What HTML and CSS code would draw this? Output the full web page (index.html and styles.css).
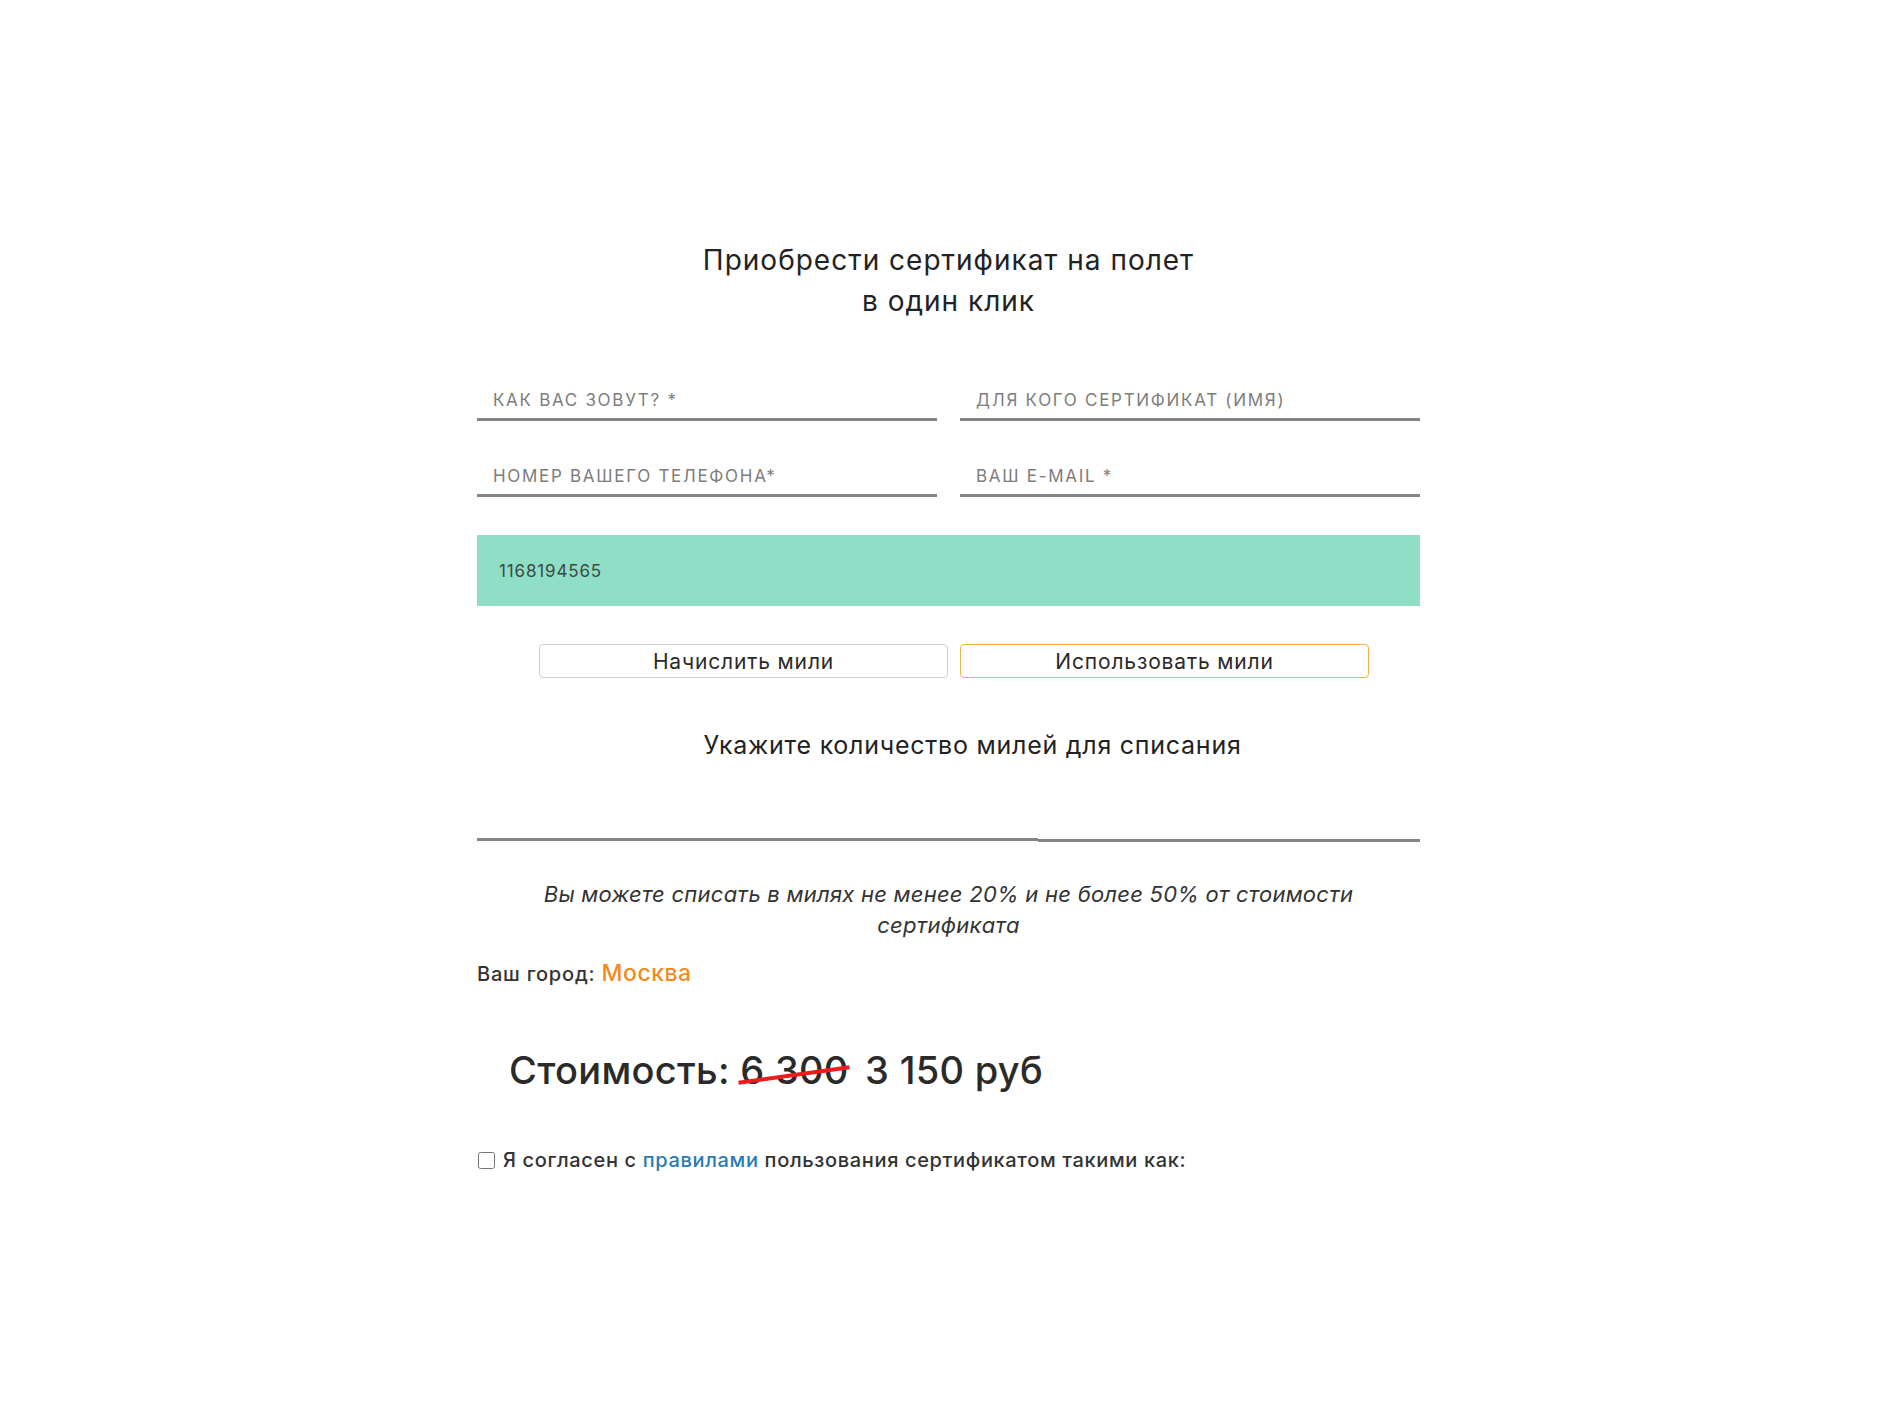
FILE: index.html
```html
<!DOCTYPE html>
<html lang="ru">
<head>
<meta charset="utf-8">
<title>Сертификат</title>
<link rel="stylesheet" href="styles.css">
</head>
<body>
<div class="wrap">
  <h1 class="title">Приобрести сертификат на полет<br>в один клик</h1>
  <div class="grid">
    <input class="field" type="text" placeholder="Как вас зовут? *">
    <input class="field" type="text" placeholder="Для кого сертификат (имя)">
    <input class="field" type="text" placeholder="Номер вашего телефона*">
    <input class="field" type="text" placeholder="Ваш e-mail *">
  </div>
  <div class="card">1168194565</div>
  <div class="btns">
    <button class="btn">Начислить мили</button>
    <button class="btn btn-active">Использовать мили</button>
  </div>
  <p class="miles-title">Укажите количество милей для списания</p>
  <div class="miles-input"><span class="miles-left"></span><span class="miles-right"></span></div>
  <p class="note">Вы можете списать в милях не менее 20% и не более 50% от стоимости сертификата</p>
  <p class="city">Ваш город: <span class="city-name">Москва</span></p>
  <p class="price">Стоимость: <span class="old">6 300</span> 3 150 руб</p>
  <label class="agree"><input type="checkbox" class="check"> Я согласен с <a href="#" class="link">правилами</a> пользования сертификатом такими как:</label>
</div>
</body>
</html>
```

FILE: styles.css
```css
html, body {
  margin: 0;
  padding: 0;
  background: #fff;
}
body {
  padding-left: 7px;
  font-family: Inter, "Noto Sans", sans-serif;
  color: #2a2a2a;
}
.wrap {
  width: 943px;
  margin: 0 auto;
  padding-top: 240px;
  padding-bottom: 200px;
}
.title {
  margin: 0;
  text-align: center;
  font-weight: 400;
  font-size: 28px;
  line-height: 41px;
  letter-spacing: 1px;
  color: #222;
}
.grid {
  margin-top: 53px;
  display: grid;
  grid-template-columns: 460px 460px;
  column-gap: 23px;
  row-gap: 30px;
}
.field {
  display: block;
  width: 100%;
  height: 46px;
  box-sizing: border-box;
  border: 0;
  border-bottom: 3px solid #858585;
  padding: 7px 0 0 16px;
  font-family: inherit;
  font-size: 17px;
  letter-spacing: 1.7px;
  text-transform: uppercase;
  outline: none;
  background: transparent;
}
.field::placeholder {
  color: #7d7d7d;
  text-transform: uppercase;
}
.card {
  margin-top: 38px;
  height: 71px;
  background: #8fdec6;
  display: flex;
  align-items: center;
  padding-left: 22px;
  font-size: 17px;
  letter-spacing: 0.85px;
  color: #3a4a44;
}
.btns {
  margin-top: 38px;
  display: flex;
  gap: 12px;
  padding: 0 51px 0 62px;
}
.btn {
  flex: 1;
  height: 34px;
  background: #fff;
  border: 1px solid #cfcfcf;
  border-radius: 4px;
  font-family: inherit;
  font-size: 21px;
  color: #2a2a2a;
  letter-spacing: 0.85px;
  padding: 0;
}
.btn-active {
  border-color: #efb14c;
}
.miles-title {
  margin: 52px 0 0;
  text-align: center;
  font-size: 25px;
  line-height: 30px;
  letter-spacing: 0.75px;
  color: #222;
  padding-left: 48px;
}
.miles-input {
  margin-top: 78px;
  display: flex;
  align-items: flex-end;
  height: 3px;
}
.miles-left {
  width: 561px;
  height: 3px;
  background: #858585;
  align-self: flex-start;
}
.miles-right {
  flex: 1;
  height: 3px;
  background: #858585;
  transform: translateY(1px);
}
.note {
  margin: 38px 0 0;
  padding: 0 50px;
  text-align: center;
  font-style: italic;
  font-size: 22px;
  line-height: 31px;
  letter-spacing: 0.25px;
  color: #333;
}
.city {
  margin: 18px 0 0;
  font-size: 20px;
  line-height: 28px;
  letter-spacing: 0.8px;
  font-weight: 500;
  color: #333;
}
.city-name {
  color: #f28a1f;
  font-size: 23px;
  letter-spacing: 0.5px;
}
.price {
  margin: 58px 0 0;
  padding-left: 32px;
  font-size: 38px;
  line-height: 48px;
  letter-spacing: 0.3px;
  font-weight: 500;
  color: #2a2a2a;
}
.old {
  position: relative;
  display: inline-block;
  margin-right: 6px;
}
.old::after {
  content: "";
  position: absolute;
  left: -2px;
  right: -2px;
  top: 50%;
  height: 4px;
  background: #ee1b1b;
  transform: translateY(3px) rotate(-8deg);
}
.agree {
  display: flex;
  align-items: center;
  margin-top: 54px;
  font-size: 20px;
  line-height: 24px;
  letter-spacing: 0.65px;
  font-weight: 500;
  color: #333;
  white-space: pre;
}
.check {
  width: 17px;
  height: 17px;
  margin: 0 2px 0 1px;
}
.link {
  color: #2a7bb2;
  text-decoration: none;
}
```
